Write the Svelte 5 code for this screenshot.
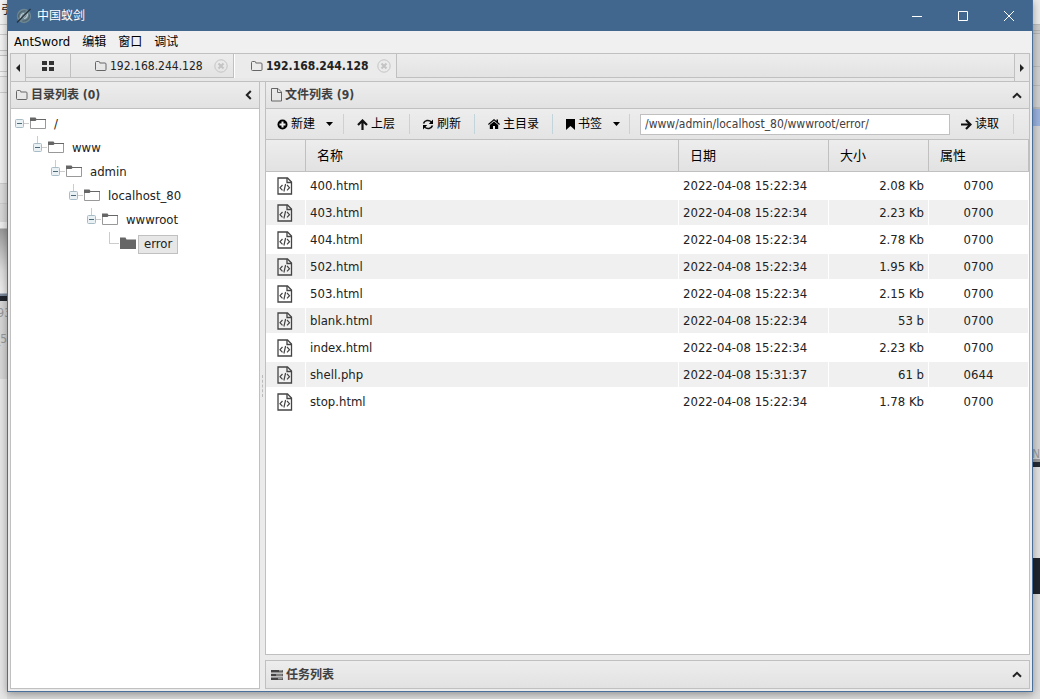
<script lang="ts">
  interface TreeNode {
    name: string,
    selected?: boolean
  }

  interface FileItem {
    name: string,
    date: string,
    size: string,
    attr: string
  }

  let menus = ['AntSword', '编辑', '窗口', '调试']

  let tabs = [
    { title: '192.168.244.128', active: false },
    { title: '192.168.244.128', active: true },
  ]

  let tree: TreeNode[] = [
    { name: '/' },
    { name: 'www' },
    { name: 'admin' },
    { name: 'localhost_80' },
    { name: 'wwwroot' },
    { name: 'error', selected: true },
  ]

  const file = (name: string, size: string, attr = '0700', date = '2022-04-08 15:22:34'): FileItem => ({
    name,
    date,
    size,
    attr,
  })

  let files = [
    file('400.html', '2.08 Kb'),
    file('403.html', '2.23 Kb'),
    file('404.html', '2.78 Kb'),
    file('502.html', '1.95 Kb'),
    file('503.html', '2.15 Kb'),
    file('blank.html', '53 b'),
    file('index.html', '2.23 Kb'),
    file('shell.php', '61 b', '0644', '2022-04-08 15:31:37'),
    file('stop.html', '1.78 Kb'),
  ]

  let path = $state('/www/admin/localhost_80/wwwroot/error/')
</script>

{#snippet folder()}
  <svg class="folder" width="12" height="12" viewBox="0 0 12 12">
    <path d="M.5 9.5v-7a1 1 0 0 1 1-1h2.2a1 1 0 0 1 1 1v.5h5.3a1 1 0 0 1 1 1v5.5a1 1 0 0 1-1 1h-8.500a1 1 0 0 1-1-1z" fill="none" stroke="currentColor" />
  </svg>
{/snippet}

{#snippet chevronUp()}
  <svg width="10" height="7" viewBox="0 0 10 7"><path d="M1 5.800 5 1.800l4 4" fill="none" stroke="#222" stroke-width="2" /></svg>
{/snippet}

<div class="desktop">
  <!-- windows that stick out behind this one -->
  <div class="behind left" aria-hidden="true">
    <span class="bit quote">引</span>
    <span class="bit num">93</span>
    <span class="bit num2">_5</span>
  </div>

  <main class="window">
    <header class="titlebar">
      <svg width="16" height="16" viewBox="0 0 16 16">
        <circle cx="8" cy="8" r="7.200" fill="#6d8792" />
        <path d="M2.500 9.500a6 6 0 0 1 7-6.500M13.500 6.500a6 6 0 0 1-7 6.500" fill="none" stroke="#50646e" stroke-width="1.300" />
        <path d="M5 10.500c-1-2 .5-5 3-5M11 5.500c1 2-.5 5-3 5M6.500 9.500l3-3" fill="none" stroke="#c3d0d5" stroke-width="1.200" />
        <path d="M1 14.500 14.500 1" stroke="#263139" stroke-width="1.200" />
      </svg>
      <h1>中国蚁剑</h1>
      <div class="winbtns">
        <button aria-label="Minimize"><svg width="12" height="12"><path d="M1 6.500h10" stroke="#fff" /></svg></button>
        <button aria-label="Maximize"><svg width="12" height="12"><path d="M1.500 1.500h9v9h-9z" fill="none" stroke="#fff" /></svg></button>
        <button aria-label="Close"><svg width="12" height="12"><path d="m1 1 10 10M11 1 1 11" stroke="#fff" /></svg></button>
      </div>
    </header>

    <nav class="menubar">
      {#each menus as menu}
        <button>{menu}</button>
      {/each}
    </nav>

    <div class="body">
      <div class="tabbar">
        <button class="scroll" aria-label="Previous tabs"><svg width="4" height="8"><path d="M4 0v8L0 4z" fill="#222" /></svg></button>
        <div class="tabs">
          <button class="tab home" aria-label="Home">
            <svg width="12" height="10"><path d="M0 0h5v4H0zM7 0h5v4H7zM0 6h5v4H0zM7 6h5v4H7z" fill="#333" /></svg>
          </button>
          {#each tabs as tab}
            <div class="tab" class:active={tab.active}>
              <button class="title">{@render folder()}{tab.title}</button>
              <button class="close" aria-label="Close tab">
                <svg width="14" height="14" viewBox="0 0 14 14">
                  <circle cx="7" cy="7" r="6.200" fill="none" stroke="currentColor" />
                  <path d="m4.500 4.500 5 5M9.500 4.500l-5 5" stroke="currentColor" stroke-width="2" />
                </svg>
              </button>
            </div>
          {/each}
          <div class="rest"></div>
        </div>
        <button class="scroll next" aria-label="Next tabs"><svg width="4" height="8"><path d="M0 0v8l4-4z" fill="#222" /></svg></button>
      </div>

      <div class="panes">
        <section class="pane tree">
          <div class="head">
            {@render folder()}
            <h2>目录列表 (0)</h2>
            <button class="collapse" aria-label="Collapse">
              <svg width="7" height="10" viewBox="0 0 7 10"><path d="m5.800 1-4 4 4 4" fill="none" stroke="#222" stroke-width="2" /></svg>
            </button>
          </div>
          <div class="nodes">
            {#each tree as node, depth}
              <div class="node" style="padding-left: {depth * 18}px">
                <svg width="19" height="24">
                  {#if depth > 0}
                    <path d="M8.500 0v{node.selected ? 12 : 7}" stroke="#ccc" />
                  {/if}
                  {#if node.selected}
                    <path d="M8 11.500h10" stroke="#ccc" />
                  {:else}
                    <path d="M13 11.500h5" stroke="#ccc" />
                    <rect x="4.500" y="7.500" width="8" height="8" rx="1" fill="#eaf1f5" stroke="#a9bbc5" />
                    <path d="M6 11.500h5" stroke="#4d6877" />
                  {/if}
                </svg>
                <svg width="17" height="24">
                  {#if node.selected}
                    <path d="M0 17V5.500h5.500l1 2H16V17z" fill="#666" />
                  {:else}
                    <path d="M.5 16.500v-9h15v9z" fill="#fff" stroke="#999" />
                    <path d="M0 9V5.500h5.500l1 1.500H16v1H6.500L5.500 9z" fill="#666" />
                  {/if}
                </svg>
                <button class="label" class:selected={node.selected}>{node.name}</button>
              </div>
            {/each}
          </div>
        </section>

        <div class="splitter"><i></i></div>

        <div class="right">
          <section class="pane files">
            <div class="head">
              <svg class="doc" width="12" height="14" viewBox="0 0 12 14"><path d="M.5.500h6.500l3.500 3.500v9H.5zM6.500.500v4h4" fill="none" stroke="#666" /></svg>
              <h2>文件列表 (9)</h2>
              <button class="collapse" aria-label="Collapse">{@render chevronUp()}</button>
            </div>

            <div class="toolbar">
              <button class="tool drop">
                <svg width="11" height="11" viewBox="0 0 11 11"><circle cx="5.500" cy="5.500" r="5" /><path d="M5.500 2.500v6M2.500 5.500h6" stroke="#eee" stroke-width="2" /></svg>
                新建
                <svg class="caret" width="7" height="4"><path d="M0 0h7L3.500 4z" /></svg>
              </button>
              <button class="tool up">
                <svg width="11" height="11" viewBox="0 0 11 11"><path d="M5.500 1.500V11M1 6l4.500-4.500L10 6" fill="none" stroke="#111" stroke-width="2.200" /></svg>
                上层
              </button>
              <button class="tool refresh">
                <svg width="12" height="11" viewBox="0 0 12 11"><path d="M1.500 4.500a4.500 4.200 0 0 1 7.800-1.500M10.500 6.500a4.500 4.200 0 0 1-7.800 1.500" fill="none" stroke="#111" stroke-width="1.600" /><path d="M11 .5V5H6.800zM1 10.500V6h4.200z" /></svg>
                刷新
              </button>
              <button class="tool main">
                <svg width="12" height="10" viewBox="0 0 12 10"><path d="M6 0 0 5l.8.900L6 1.600l5.200 4.300.8-.9-2-1.700V.5H8.500v1.600z" /><path d="M6 2.500 1.800 6v4H5V7h2v3h3.200V6z" /></svg>
                主目录
              </button>
              <button class="tool drop mark">
                <svg width="9" height="11"><path d="M0 0h9v11L4.500 7 0 11z" /></svg>
                书签
                <svg class="caret" width="7" height="4"><path d="M0 0h7L3.500 4z" /></svg>
              </button>
              <input type="text" aria-label="路径" bind:value={path} />
              <button class="tool read">
                <svg width="11" height="11" viewBox="0 0 11 11"><path d="M0 5.500h9M5 1l4.500 4.500L5 10" fill="none" stroke="#111" stroke-width="2.200" /></svg>
                读取
              </button>
            </div>

            <table>
              <colgroup>
                <col class="c-icon" />
                <col />
                <col class="c-date" />
                <col class="c-size" />
                <col class="c-attr" />
              </colgroup>
              <thead>
                <tr>
                  <th></th>
                  <th>名称</th>
                  <th>日期</th>
                  <th>大小</th>
                  <th>属性</th>
                </tr>
              </thead>
              <tbody>
                {#each files as f}
                  <tr>
                    <td class="icon">
                      <svg width="16" height="18" viewBox="0 0 16 18" fill="none" stroke="#444">
                        <path d="M1 1h9.500l4 4v12H1z" stroke-width="1.300" />
                        <path d="M10 1v4.500h4.500" stroke-width="1.300" />
                        <path d="m5.500 8-2.500 2.700 2.500 2.600M10 8l2.500 2.700-2.500 2.600M8.600 7l-1.700 7.500" stroke-width="1.200" />
                      </svg>
                    </td>
                    <td>{f.name}</td>
                    <td>{f.date}</td>
                    <td class="size">{f.size}</td>
                    <td class="attr">{f.attr}</td>
                  </tr>
                {/each}
              </tbody>
            </table>
          </section>

          <section class="pane tasks">
            <div class="head">
              <svg width="12" height="10"><path d="M0 0h12v2.500H0zM0 3.800h12v2.500H0zM0 7.500h12v2.500H0z" fill="#444" /><path d="M8 .8h3.500M5 5h6.500M7 8.800h4.500" stroke="#bbb" /></svg>
              <h2>任务列表</h2>
              <button class="collapse" aria-label="Expand">{@render chevronUp()}</button>
            </div>
          </section>
        </div>
      </div>
    </div>
  </main>

  <div class="behind side" aria-hidden="true">
    <span class="bit letter">N</span>
  </div>
</div>

<style>
  :global(body) {
    font-family: "DejaVu Sans Condensed", "Noto Sans CJK SC", sans-serif;
    font-size: 12px;
    line-height: 16px;
    color: #222;
  }

  button {
    display: flex;
    align-items: center;
    padding: 0;
    border: 0;
    background: none;
    font: inherit;
    color: inherit;
    white-space: nowrap;
  }

  svg {
    flex: none;
    display: block;
  }

  .desktop {
    display: flex;
    height: 100vh;
    overflow: hidden;
    background: #dcdcdc;
  }

  .behind {
    position: relative;
    flex: none;
    overflow: hidden;
  }

  .left {
    width: 7px;
    background: linear-gradient(#f3f3f3 24px, #ccc 24px 25px, #f3f3f3 25px 34px, #ccc 34px 35px, #f3f3f3 35px 50px, #c4c4c4 50px 51px, #eee 51px 55px, #c4c4c4 55px 56px, #f3f3f3 56px 71px, #ccc 71px 72px, #f3f3f3 72px 76px, #ccc 76px 77px, #eee 77px 92px, #ccc 92px 93px, #f0f0f0 93px 183px, #ccc 183px 184px, #ddd 184px 203px, #ccc 203px 204px, #d8d8d8 204px 222px, #eee 222px 228px, #999 229px, #ddd 270px, #eee 293px, #79879a 294px 296px, #20252d 296px 301px, #d6d6d6 301px 379px, #e6e6e6 379px);
  }

  .side {
    width: 7px;
    background: linear-gradient(#ececec 24px, #bdbdbd 24px 25px, #ccc 25px 30px, #b5b5b5 30px 31px, #ccc 31px 33px, #b5b5b5 33px 34px, #cfcfcf 34px 66px, #bbb 66px 67px, #d0d0d0 67px 85px, #bbb 85px 86px, #d0d0d0 86px 107px, #bbb 107px 109px, #9ab2de 109px 126px, #d4d4d4 126px 459px, #999 459px 462px, #252b33 462px 467px, #e2e2e2 467px 558px, #20252d 558px 594px, #dedede 594px);
  }

  .bit {
    position: absolute;
    right: 0;
    color: #999;
  }

  .quote {
    top: 2px;
    right: -6px;
    color: #222;
  }

  .num {
    top: 305px;
    right: -4px;
  }

  .num2 {
    top: 331px;
  }

  .letter {
    top: 446px;
  }

  .window {
    z-index: 1;
    display: flex;
    flex-direction: column;
    flex: 1;
    min-width: 0;
    box-sizing: border-box;
    margin-bottom: 7px;
    border: 1px solid #4a6f9b;
    border-top: 0;
    background: #ebebeb;
    box-shadow: 0 2px 8px rgb(0 0 0 / 35%);
  }

  .titlebar {
    display: flex;
    align-items: center;
    height: 31px;
    padding-left: 8px;
    background: #41678f;
    color: #fff;
  }

  h1 {
    flex: 1;
    margin: 0 0 0 5px;
    font-size: 12px;
    font-weight: 400;
  }

  .winbtns {
    display: flex;
  }

  .winbtns button {
    justify-content: center;
    width: 46px;
    height: 31px;
  }

  .menubar {
    display: flex;
    gap: 12px;
    height: 22px;
    padding-left: 6px;
    background: #f0f0f0;
    color: #000;
  }

  .menubar button:first-child {
    font-size: 13px;
  }

  .body {
    display: flex;
    flex-direction: column;
    flex: 1;
    min-height: 0;
    margin: 0 2px 2px;
  }

  .tabbar {
    display: flex;
    height: 28px;
    box-sizing: border-box;
    border: 1px solid #c0c0c0;
    border-bottom: 0;
    background: #e8e8e8;
  }

  .scroll {
    justify-content: center;
    width: 14px;
    border-right: 1px solid #c0c0c0;
    box-sizing: content-box;
  }

  .scroll.next {
    border-right: 0;
    border-left: 1px solid #c0c0c0;
  }

  .tabs {
    display: flex;
    flex: 1;
    height: 24px;
  }

  .tab {
    display: flex;
    align-items: center;
    justify-content: space-between;
    box-sizing: border-box;
    width: 163px;
    padding: 0 5px 0 24px;
    border-right: 1px solid #c0c0c0;
    border-bottom: 1px solid #c0c0c0;
    background: linear-gradient(#ededed, #e3e3e3);
  }

  .tab.home {
    justify-content: center;
    width: 45px;
    padding: 0;
  }

  .tab.active {
    padding-left: 16px;
    border-bottom: 0;
    border-left: 1px solid #fff;
    background: #ebebeb;
    font-weight: 700;
  }

  .tab .title {
    gap: 3px;
  }

  .close {
    color: #c4c4c4;
  }

  .rest {
    flex: 1;
    border-bottom: 1px solid #c0c0c0;
    background: linear-gradient(#ededed, #e3e3e3);
  }

  .folder {
    color: #666;
  }

  .panes {
    display: flex;
    flex: 1;
    min-height: 0;
  }

  .pane {
    box-sizing: border-box;
    border: 1px solid #c0c0c0;
    background: #fff;
  }

  .tree {
    width: 250px;
    flex: none;
  }

  .head {
    display: flex;
    align-items: center;
    height: 26px;
    padding: 0 7px 0 5px;
    border-bottom: 1px solid #c0c0c0;
    background: linear-gradient(#ededed, #e2e2e2);
    color: #404040;
  }

  h2 {
    flex: 1;
    margin: 0 0 0 3px;
    font-size: 12px;
    font-weight: 700;
  }

  .doc {
    margin-right: -1px;
  }

  .nodes {
    padding-top: 3px;
  }

  .node {
    display: flex;
    align-items: center;
    height: 24px;
  }

  .label {
    height: 19px;
    box-sizing: border-box;
    padding: 0 5px;
    border: 1px solid transparent;
    margin-left: 1px;
    font-size: 13px;
  }

  .label.selected {
    border-color: #c0c0c0;
    background: #e7e7e7;
  }

  .splitter {
    display: flex;
    align-items: center;
    justify-content: center;
    width: 5px;
    border-top: 1px solid #c0c0c0;
  }

  .splitter i {
    height: 22px;
    border-left: 1px dashed #bbb;
  }

  .right {
    display: flex;
    flex-direction: column;
    flex: 1;
    min-width: 0;
    gap: 5px;
  }

  .files {
    flex: 1;
  }

  .tasks {
    height: 29px;
  }

  .tasks .head {
    height: 27px;
    border-bottom: 0;
  }

  .toolbar {
    display: flex;
    align-items: center;
    height: 30px;
    padding-right: 15px;
    border-bottom: 1px solid #c0c0c0;
    background: linear-gradient(#ededed, #e4e4e4);
  }

  .tool {
    box-sizing: border-box;
    gap: 3px;
    width: 66px;
    height: 20px;
    padding-left: 13px;
    border-right: 1px solid #c2d5dc;
    color: #000;
  }

  .tool.drop {
    width: 78px;
    padding-left: 11px;
  }

  .tool.refresh {
    width: 65px;
    padding-left: 12px;
  }

  .tool.main {
    width: 78px;
  }

  .tool.mark {
    width: 77px;
    padding-left: 13px;
  }

  .tool.read {
    width: 64px;
    padding-left: 11px;
  }

  .caret {
    margin-left: 8px;
  }

  input {
    flex: 1;
    min-width: 0;
    height: 21px;
    box-sizing: border-box;
    margin-left: 10px;
    padding: 0 4px;
    border: 1px solid #c0c0c0;
    background: #fff;
    font: inherit;
    color: #404040;
  }

  table {
    width: 100%;
    table-layout: fixed;
    border-collapse: separate;
    border-spacing: 0;
  }

  .c-icon {
    width: 40px;
  }

  .c-date {
    width: 150px;
  }

  .c-size,
  .c-attr {
    width: 100px;
  }

  th {
    height: 32px;
    box-sizing: border-box;
    padding: 0 11px;
    border-right: 1px solid #c0c0c0;
    border-bottom: 1px solid #c0c0c0;
    background: linear-gradient(#ededed, #e2e2e2);
    font-size: 13px;
    font-weight: 400;
    text-align: left;
    color: #000;
  }

  td {
    height: 27px;
    box-sizing: border-box;
    padding: 0 4px;
    border: solid #fff;
    border-width: 1px 1px 1px 0;
    font-size: 13px;
    line-height: 16px;
  }

  tbody tr:nth-child(even) td {
    background: #f0f0f0;
  }

  td.icon {
    padding-left: 11px;
  }

  td.size {
    text-align: right;
  }

  td.attr {
    text-align: center;
  }
</style>
